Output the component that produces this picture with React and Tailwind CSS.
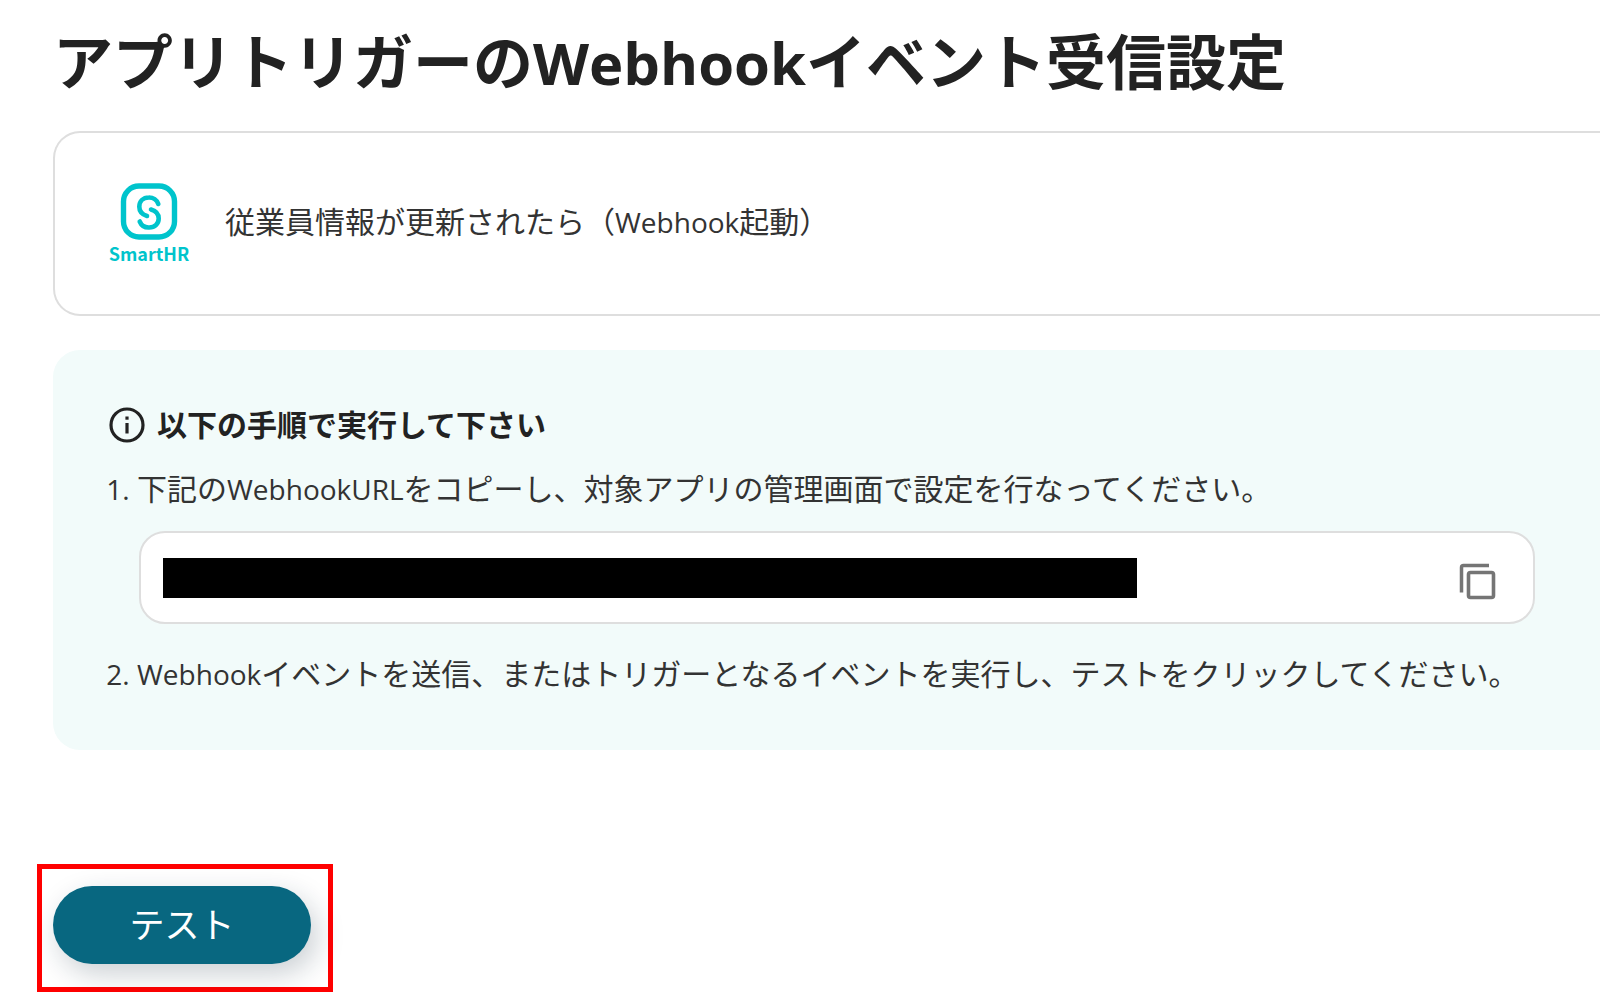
import React from "react";

// latin words are set a little smaller than the kana around them
function Latin({ children }) {
  return <span className="text-[28px]">{children}</span>;
}

function SmartHRLogo() {
  return (
    <div className="flex w-[78px] flex-col items-center text-[#00c4cc]">
      <svg className="h-[58px] w-[58px]" viewBox="0 0 58 58" fill="none">
        <rect
          x="3.5"
          y="4"
          width="51"
          height="51"
          rx="15.5"
          stroke="currentColor"
          strokeWidth="5.4"
        />
        <path
          d="M38.300 22A9.800 9.800 0 0 0 28.800 15.500C23 15.500 19.300 19.500 19.300 24.800C19.300 29.500 22 32.500 27 34M31 27.500C36 29 38.700 32 38.700 36.500C38.700 41.500 35 45.500 29.200 45.500A9.800 9.800 0 0 1 19.700 39.500"
          stroke="currentColor"
          strokeWidth="4.6"
          strokeLinecap="round"
        />
      </svg>
      <span className="font-['Noto_Sans_CJK_JP',sans-serif] text-[18px] font-bold leading-[26px]">
        SmartHR
      </span>
    </div>
  );
}

function InfoIcon() {
  return (
    <svg className="h-9 w-9 shrink-0" viewBox="0 0 36 36" fill="none">
      <circle cx="18" cy="18" r="16" stroke="currentColor" strokeWidth="3.2" />
      <path d="M18 16V26.500" stroke="currentColor" strokeWidth="3.2" />
      <path d="M18 9.500V12.700" stroke="currentColor" strokeWidth="3.2" />
    </svg>
  );
}

function CopyIcon() {
  return (
    <svg className="h-[38px] w-[38px]" viewBox="0 0 38 38" fill="none">
      <path
        d="M2.500 29.500V4.500Q2.500 2.500 4.500 2.500H30"
        stroke="currentColor"
        strokeWidth="3.5"
      />
      <rect
        x="9.500"
        y="9.500"
        width="25"
        height="25"
        rx="2"
        stroke="currentColor"
        strokeWidth="3.6"
      />
    </svg>
  );
}

function App() {
  return (
    <main className="overflow-hidden bg-white pl-[53px] pt-6 font-['Open_Sans','Noto_Sans_CJK_JP',sans-serif] text-[30px] leading-[44px] text-[#333]">
      <h1 className="text-[60px] font-bold leading-[76px] text-[#222]">
        アプリトリガーの<span className="text-[58px]">Webhook</span>
        イベント受信設定
      </h1>

      <section className="mt-[30px] flex h-[185px] items-center gap-[37px] rounded-l-[27px] border-2 border-r-0 border-[#dedede] pl-[55px]">
        <SmartHRLogo />
        <p className="pb-1">
          従業員情報が更新されたら（<Latin>Webhook</Latin>起動）
        </p>
      </section>

      <section className="mt-[34px] rounded-l-[27px] bg-[#f2fbfa] pb-[54px] pl-14 pr-[65px] pt-[53px]">
        <h2 className="flex items-center gap-3 font-bold text-[#222]">
          <InfoIcon />
          以下の手順で実行して下さい
        </h2>
        <ol className="mt-5 list-decimal pl-7 marker:text-[28px]">
          <li>
            <label htmlFor="webhook-url">
              下記の<Latin>WebhookURL</Latin>
              をコピーし、対象アプリの管理画面で設定を行なってください。
            </label>
            <div className="mb-7 ml-0.5 mt-5 flex h-[93px] items-center justify-between rounded-[26px] border-2 border-[#dedede] bg-white pl-[22px] pr-9">
              <input
                id="webhook-url"
                readOnly
                className="h-10 w-[73%] bg-black text-black outline-none"
              />
              <button
                type="button"
                aria-label="コピー"
                className="pt-2 text-[#757575]"
              >
                <CopyIcon />
              </button>
            </div>
          </li>
          <li>
            <Latin>Webhook</Latin>
            イベントを送信、またはトリガーとなるイベントを実行し、テストをクリックしてください。
          </li>
        </ol>
      </section>

      <div className="-ml-4 mt-[114px] w-fit border-[5px] border-[#ff0000] px-[11px] pb-[23px] pr-[17px] pt-[17px]">
        <button
          type="button"
          className="h-[78px] w-[258px] rounded-full bg-[#086780] text-[35px] text-white shadow-[6px_10px_28px_rgba(20,40,60,0.22)]"
        >
          テスト
        </button>
      </div>
    </main>
  );
}

export default App;
